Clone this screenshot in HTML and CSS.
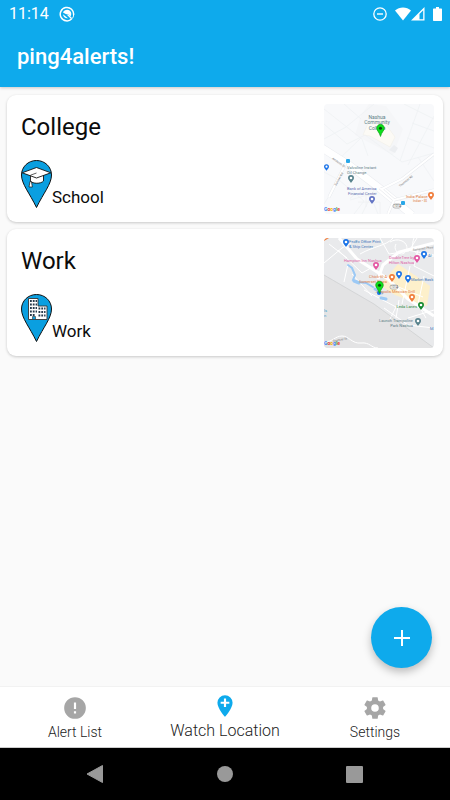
FILE: index.html
```html
<!DOCTYPE html>
<html lang="en">
<head>
    <meta charset="UTF-8">
    <meta name="viewport" content="width=device-width, initial-scale=1.0">
    <title>ping4alerts!</title>
    <link rel="stylesheet" href="styles.css">
</head>
<body>
    <svg class="sprite" aria-hidden="true">
        <symbol id="poi" viewBox="0 0 6 8">
            <path d="M3 0a3 3 0 0 0-3 3c0 2 2 3 3 5 1-2 3-3 3-5a3 3 0 0 0-3-3z" fill="currentColor"/>
            <circle cx="3" cy="3" r="1.3" fill="#fff"/>
        </symbol>
        <symbol id="place" viewBox="0 0 8 12">
            <path d="M4 .3a3.5 3.5 0 0 0-3.5 3.6c0 2.2 2.6 3.8 3.5 7.6.9-3.8 3.5-5.4 3.5-7.6A3.5 3.5 0 0 0 4 .3z" fill="#0de01b" stroke="#079a10" stroke-width=".6"/>
            <circle cx="4" cy="4" r="1.4" fill="#064a09"/>
        </symbol>
    </svg>

    <header class="header">
        <div class="status-bar">
            <span class="clock">11:14</span>
            <svg class="status-icon" viewBox="0 0 16 16" width="16" height="16">
                <path d="M12.8 12.8A6.7 6.7 0 1 1 14.6 9" fill="none" stroke="#fff" stroke-width="1.5"/>
                <path d="M14.6 9c0 1.6-.7 2.8-1.8 3.8" fill="none" stroke="#fff" stroke-width="1"/>
                <path d="M4 6.6C5 3.8 8.6 2.9 10.9 4.8c1.7 1.5 1.8 3.9.6 5.6L9 7.9 7.2 8.2z" fill="#fff"/>
                <path d="M4 8.2l5 4c-2.4.6-4.7-1-5-4z" fill="#fff"/>
                <path d="M8.5 8.5l4 4" stroke="#fff" stroke-width="1.2"/>
            </svg>
            <div class="status-right">
                <svg viewBox="0 0 14 14" width="14" height="14">
                    <circle cx="7" cy="7" r="6.2" fill="none" stroke="#fff" stroke-width="1.3"/>
                    <path d="M4 7h6" stroke="#fff" stroke-width="1.4"/>
                </svg>
                <svg class="wifi" viewBox="0 0 16 14" width="16" height="14">
                    <path d="M0 3.5C4.5-.5 11.5-.5 16 3.5L8 13.5z" fill="#fff"/>
                </svg>
                <svg viewBox="0 0 14 14" width="14" height="14">
                    <path d="M13.5 0v13.5H0zM12.2 3.2L8.5 6.9v5.3h3.7z" fill="#fff" fill-rule="evenodd"/>
                </svg>
                <svg class="battery" viewBox="0 0 9 14" width="9" height="14">
                    <path d="M3 0h3v1.5h2.3q.7 0 .7.7v11.1q0 .7-.7.7H.7q-.7 0-.7-.7V2.2q0-.7.7-.7H3z" fill="#fff"/>
                </svg>
            </div>
        </div>
        <h1>ping4alerts!</h1>
    </header>

    <main class="content">
        <article class="card">
            <div class="info">
                <h2>College</h2>
                <div class="category">
                    <svg viewBox="0 0 31 48" width="31" height="48">
                        <path d="M15.5.5C7 .5.5 7 .5 15c0 9 8 18 15 32.5C22.5 33 30.5 24 30.5 15 30.5 7 24 .5 15.5.5z" fill="#0a9fe0" stroke="#111" stroke-width="1"/>
                        <path d="M9.5 14v7c2 3 10.5 3 13 0v-7z" fill="#fff" stroke="#111" stroke-width=".9"/>
                        <path d="M1.2 12.8L15.5 7.5l14.3 5.3L15.5 18z" fill="#fff" stroke="#111" stroke-width=".9"/>
                        <path d="M15.5 13L9.5 15.2v7" fill="none" stroke="#333" stroke-width=".8"/>
                        <path d="M9 21.5h1.4l1 5.5H8z" fill="#fff" stroke="#111" stroke-width=".7"/>
                    </svg>
                    <span>School</span>
                </div>
            </div>
            <svg class="map" viewBox="0 0 110 110" width="110" height="110" role="img" aria-label="Map of College">
                <rect width="110" height="110" fill="#f8f9fb"/>
                <path d="M37 11l8-11 17 2 17 23-10 26-38-20z" fill="#f5f6f8"/>
                <path d="M45 17l13-2 13 18-5 10-20-11-7-1z" fill="#fcfaf5" stroke="#efece5" stroke-width=".5"/>
                <path d="M70 41l4 3-3 5-6-3z" fill="#eceef1"/>
                <g fill="none" stroke="#eff1f4" stroke-width=".8">
                    <path d="M0 35l22-12L50 0M0 5l38 30 6 17M20 0l17 15M0 20l23 20 18-9 37 27 32-9M76 57l20-57M84 61L110 12M88 19l22 8M83 34l27 10M80 0l30 15M14 56L37 34M94 53l16 24"/>
                    <path d="M0 68l15 8-15 24M15 76l25 21-10 13M26 95c4-7 16-8 22 0l6 15M26 96l28-8M34 98h22v12M42 89v14M52 82L38 110"/>
                </g>
                <path d="M-2 44l27 17 29 22 34 28" fill="none" stroke="#e9ebef" stroke-width="8"/>
                <path d="M-2 44l27 17 29 22 34 28" fill="none" stroke="#fff" stroke-width="7"/>
                <path d="M22 59L5 93M58 85l20-10 32-25M56 84l14 12 40-10M70 96l-6 14" fill="none" stroke="#e8eaee" stroke-width="3"/>
                <path d="M22 59L5 93M58 85l20-10 32-25M56 84l14 12 40-10M70 96l-6 14" fill="none" stroke="#fff" stroke-width="2"/>
                <g class="map-title" fill="#5b7e85" text-anchor="middle">
                    <text x="53" y="15">Nashua</text>
                    <text x="53" y="20">Community</text>
                    <text x="53" y="26">College</text>
                </g>
                <use href="#place" x="52" y="20" width="9" height="13"/>
                <g class="map-text">
                    <text x="23" y="65" fill="#607d86">Valvoline Instant</text>
                    <text x="23" y="70" fill="#607d86">Oil Change</text>
                    <text x="23" y="86" fill="#596bb0">Bank of America</text>
                    <text x="24" y="91" fill="#596bb0">Financial Center</text>
                    <text x="82" y="94" fill="#e07b3c">India Palace</text>
                    <text x="89" y="98" class="map-small" fill="#e07b3c">Indian • $$</text>
                    <text transform="translate(8 55) rotate(35)" class="map-small" fill="#777">Amherst St</text>
                    <text transform="translate(12 82) rotate(-60)" class="map-small" fill="#777">Sumner Rd</text>
                    <text transform="translate(76 83) rotate(-38)" class="map-small" fill="#777">Thornton Rd</text>
                </g>
                <rect x="22" y="55" width="4" height="4" rx="1" fill="#29a7e8"/>
                <rect x="77" y="97" width="4" height="4" rx="1" fill="#29a7e8"/>
                <rect x="69" y="100" width="8" height="4" rx="2" fill="#fff" stroke="#888" stroke-width=".6"/>
                <text x="70" y="103" class="map-small" fill="#555">101A</text>
                <use href="#poi" x="0" y="60" width="5" height="7" color="#1a73e8"/>
                <use href="#poi" x="24" y="71" width="6" height="8" color="#57828c"/>
                <use href="#poi" x="45" y="92" width="6" height="8" color="#6374c4"/>
                <use href="#poi" x="104" y="88" width="6" height="8" color="#f07c3a"/>
                <text class="google" x="0" y="107"><tspan fill="#4285f4">G</tspan><tspan fill="#ea4335">o</tspan><tspan fill="#f2b400">o</tspan><tspan fill="#4285f4">g</tspan><tspan fill="#34a853">l</tspan><tspan fill="#ea4335">e</tspan></text>
            </svg>
        </article>

        <article class="card">
            <div class="info">
                <h2>Work</h2>
                <div class="category">
                    <svg viewBox="0 0 31 48" width="31" height="48">
                        <path d="M15.5.5C7 .5.5 7 .5 15c0 9 8 18 15 32.5C22.5 33 30.5 24 30.5 15 30.5 7 24 .5 15.5.5z" fill="#0a9fe0" stroke="#111" stroke-width="1"/>
                        <path d="M7.5 4.5H17V12h9v13.5H7.5z" fill="#fff" stroke="#333" stroke-width=".9"/>
                        <path d="M9 7h1.8m1 0h1.8m1 0H16M9 10.5h1.8m1 0h1.8m1 0H16M9 14h1.8m1 0h1.8m1 0H16M9 17.5h1.8m1 0h1.8m1 0H16M9 21h1.8m1 0h1.8M17.5 14.5h1.8m1 0h1.8m1 0h1.4M17.5 18h1.8m1 0h1.8m1 0h1.4M17.5 21.5h1.8m1 0h1.8m1 0h1.4" stroke="#27394a" stroke-width="1.8"/>
                        <path d="M11.5 22.5h3v3h-3z" fill="#0a9fe0" stroke="#333" stroke-width=".6"/>
                    </svg>
                    <span>Work</span>
                </div>
            </div>
            <svg class="map" viewBox="0 0 110 110" width="110" height="110" role="img" aria-label="Map of Work">
                <rect width="110" height="110" fill="#e9eaec"/>
                <path d="M0 37l50 29 60 44H0z" fill="#e3e3e4"/>
                <path d="M74 26l18 12 14 10-5 20-30-11-15-10z" fill="#fdf0cb"/>
                <path d="M94 54l12-6-3 20-10-4z" fill="#fdf0cb"/>
                <g fill="none" stroke="#fff" stroke-width="1">
                    <path d="M0 25l18-15 14-8M14 12l24 23 16-9M5 6l18 14M28 36l20 22M56 0l9 16 20-3 8-13M66 4c10-6 20 2 16 9s-14 0-10-7M83 12l27 5M90 0c-6 16 8 20 20 18M94 12l-4 16 20 10M86 28l-8 38M67 46l32 13M100 38l-6 28 8 14M40 52l32 17-6 12M60 70l24 17 26 3M75 62l-3 18M84 80l26-8M24 26l-4 18M0 104c9 0 11-6 18-6s10 8 19 7 10 5 17 5M36 16c14-8 26-8 33-16"/>
                </g>
                <path d="M15 0l18 21 31 20 20 20 26 17" fill="none" stroke="#fff" stroke-width="3"/>
                <path d="M54 41l5-14 16-13 35-9" fill="none" stroke="#fff" stroke-width="3"/>
                <path d="M0 37l50 29 60 44" fill="none" stroke="#c8c9cb" stroke-width=".6"/>
                <g fill="none" stroke="#9cc9f5" stroke-linecap="round">
                    <path d="M24 27l4 3 3 7-2 5 5 2 8 1 7 4" stroke-width="2"/>
                    <path d="M30 43l5 2M51 51l7 4M57 60l5 1" stroke-width="3"/>
                </g>
                <g class="map-text">
                    <text x="25" y="5" fill="#4277ba">FedEx Office Print</text>
                    <text x="25" y="10" fill="#4277ba">&amp; Ship Center</text>
                    <text x="20" y="24" fill="#dd62a5">Hampton Inn Nashua</text>
                    <text x="65" y="21" fill="#dd62a5">DoubleTree by</text>
                    <text x="65" y="26" fill="#dd62a5">Hilton Nashua</text>
                    <text x="63" y="40" fill="#df793e" text-anchor="end">Chick-fil-A</text>
                    <text x="63" y="45" fill="#df793e" text-anchor="end">Somerset Plaza</text>
                    <text x="87" y="43" fill="#4277ba">Market Bask</text>
                    <text x="104" y="19" fill="#4277ba">Al</text>
                    <text x="91" y="55" fill="#df793e" text-anchor="end">Joppolis Mexican Grill</text>
                    <text x="93" y="70" fill="#2e8a3c" text-anchor="end">Leda Lanes</text>
                    <text x="89" y="84" fill="#607d86" text-anchor="end">Launch Trampoline</text>
                    <text x="89" y="89" fill="#607d86" text-anchor="end">Park Nashua</text>
                    <text x="106" y="92" fill="#4277ba">M</text>
                    <text x="0" y="74" fill="#399fcc">ls</text>
                    <text x="0" y="79" fill="#399fcc">n</text>
                    <text transform="translate(89 13) rotate(-8)" class="map-small" fill="#777">Somerset Pkwy</text>
                    <text transform="translate(9 104) rotate(-10)" class="map-small" fill="#777">Spencer St</text>
                </g>
                <rect x="66" y="47" width="8" height="4" rx="2" fill="#fff" stroke="#888" stroke-width=".6"/>
                <text x="67" y="50" class="map-small" fill="#555">101A</text>
                <use href="#poi" x="19" y="1" width="6" height="8" color="#1a73e8"/>
                <use href="#poi" x="49" y="24" width="6" height="8" color="#e455a2"/>
                <use href="#poi" x="90" y="17" width="6" height="8" color="#e455a2"/>
                <use href="#poi" x="97" y="13" width="6" height="8" color="#1a73e8"/>
                <use href="#poi" x="72" y="33" width="6" height="8" color="#1a73e8"/>
                <use href="#poi" x="81" y="37" width="6" height="8" color="#1a73e8"/>
                <use href="#poi" x="65" y="36" width="6" height="8" color="#f07c3a"/>
                <use href="#poi" x="85" y="56" width="6" height="8" color="#f07c3a"/>
                <use href="#poi" x="94" y="64" width="6" height="8" color="#168a30"/>
                <use href="#poi" x="91" y="80" width="6" height="8" color="#57828c"/>
                <circle cx="55" cy="55" r="2" fill="#1a73e8"/>
                <use href="#place" x="51" y="43" width="9" height="13"/>
                <path d="M0 0h5L0 3z" fill="#f07c3a"/>
                <text class="google" x="0" y="107"><tspan fill="#4285f4">G</tspan><tspan fill="#ea4335">o</tspan><tspan fill="#f2b400">o</tspan><tspan fill="#4285f4">g</tspan><tspan fill="#34a853">l</tspan><tspan fill="#ea4335">e</tspan></text>
            </svg>
        </article>

        <button class="fab" type="button" aria-label="Add location">
            <svg viewBox="0 0 16 16" width="16" height="16">
                <path d="M8 0v16M0 8h16" stroke="#fff" stroke-width="2"/>
            </svg>
        </button>
    </main>

    <nav class="tabs">
        <a href="#alerts">
            <svg viewBox="0 0 24 24" width="26" height="26">
                <path d="M12 2a10 10 0 1 0 0 20 10 10 0 0 0 0-20zm1 15h-2v-2h2zm0-4h-2V7h2z" fill="#a6a6a6"/>
            </svg>
            <span>Alert List</span>
        </a>
        <a href="#locations" class="active">
            <svg viewBox="0 0 24 24" width="26" height="26">
                <path d="M12 2a7 7 0 0 0-7 7c0 5.25 7 13 7 13s7-7.75 7-13a7 7 0 0 0-7-7zm4 8h-3v3h-2v-3H8V8h3V5h2v3h3z" fill="#0eaaec"/>
            </svg>
            <span>Watch Location</span>
        </a>
        <a href="#settings">
            <svg viewBox="0 0 24 24" width="26" height="26">
                <path d="M19.43 12.98c.04-.32.07-.64.07-.98s-.03-.66-.07-.98l2.11-1.65c.19-.15.24-.42.12-.64l-2-3.46c-.12-.22-.39-.3-.61-.22l-2.49 1c-.52-.4-1.08-.73-1.69-.98l-.38-2.65A.488.488 0 0 0 14 2h-4c-.25 0-.46.18-.49.42l-.38 2.65c-.61.25-1.17.59-1.69.98l-2.49-1c-.23-.09-.49 0-.61.22l-2 3.46c-.13.22-.07.49.12.64l2.11 1.65c-.04.32-.07.65-.07.98s.03.66.07.98l-2.11 1.65c-.19.15-.24.42-.12.64l2 3.46c.12.22.39.3.61.22l2.49-1c.52.4 1.08.73 1.69.98l.38 2.65c.03.24.24.42.49.42h4c.25 0 .46-.18.49-.42l.38-2.65c.61-.25 1.17-.59 1.69-.98l2.49 1c.23.09.49 0 .61-.22l2-3.46c.12-.22.07-.49-.12-.64zM12 15.5a3.5 3.5 0 1 1 0-7 3.5 3.5 0 0 1 0 7z" fill="#a6a6a6"/>
            </svg>
            <span>Settings</span>
        </a>
    </nav>

    <footer class="system-nav">
        <button type="button" aria-label="Back">
            <svg viewBox="0 0 18 18" width="18" height="18"><path d="M16.5.5v17L1 9z" fill="#999" stroke="#999" stroke-linejoin="round"/></svg>
        </button>
        <button type="button" aria-label="Home">
            <svg viewBox="0 0 18 18" width="18" height="18"><circle cx="9" cy="9" r="8" fill="#999"/></svg>
        </button>
        <button type="button" aria-label="Recent apps">
            <svg viewBox="0 0 18 18" width="18" height="18"><rect width="17" height="17" y="1" rx="1" fill="#999"/></svg>
        </button>
    </footer>
</body>
</html>
```

FILE: styles.css
```css
* {
    box-sizing: border-box;
}
body {
    font-family: Roboto, sans-serif;
    background-color: #fafafa;
    color: #0c0c0c;
    margin: 0;
    min-height: 100vh;
    display: flex;
    flex-direction: column;
}
h1, h2 {
    margin: 0;
}
svg {
    display: block;
}
button {
    border: 0;
    padding: 0;
    cursor: pointer;
}
.sprite {
    position: absolute;
    width: 0;
    height: 0;
}
.header {
    background: #0eaaec;
    color: #fff;
    box-shadow: 0 1px 3px rgba(0, 0, 0, 0.2);
}
.status-bar {
    display: flex;
    align-items: center;
    height: 27px;
    padding: 0 8px 0 9px;
}
.clock {
    font-size: 16px;
    line-height: 28px;
}
.status-icon {
    margin-left: 10px;
}
.status-right {
    display: flex;
    align-items: center;
    margin-left: auto;
}
.wifi {
    margin-left: 8px;
}
.battery {
    margin-left: 8px;
}
h1 {
    padding: 0 17px;
    font-size: 22px;
    font-weight: 500;
    line-height: 60px;
}
.content {
    position: relative;
    flex: 1;
    display: flex;
    flex-direction: column;
    gap: 7px;
    padding: 8px 7px;
}
.card {
    display: flex;
    justify-content: space-between;
    padding: 9px 9px 8px 14px;
    background: #fff;
    border-radius: 9px;
    box-shadow: 0 1px 3px rgba(0, 0, 0, 0.2);
}
.info {
    display: flex;
    flex-direction: column;
    justify-content: space-between;
    padding: 7px 0 6px;
}
h2 {
    font-size: 24px;
    font-weight: 400;
    line-height: 32px;
}
.category {
    display: flex;
    align-items: flex-end;
    font-size: 17px;
    line-height: 22px;
}
.map {
    border-radius: 4px;
}
.map-title {
    font-size: 5px;
}
.map-text {
    font-size: 4px;
}
.map-small {
    font-size: 3px;
}
.google {
    font-size: 5px;
    font-weight: 700;
}
.fab {
    position: absolute;
    right: 18px;
    bottom: 18px;
    display: flex;
    align-items: center;
    justify-content: center;
    width: 61px;
    height: 61px;
    border-radius: 50%;
    background: #0eaaec;
    box-shadow: 0 4px 8px rgba(0, 0, 0, 0.25);
}
.tabs {
    display: grid;
    grid-template-columns: repeat(3, 1fr);
    height: 62px;
    background: #fff;
    border-top: 1px solid #f2f2f2;
    border-bottom: 1px solid #ccc;
}
.tabs a {
    display: flex;
    flex-direction: column;
    align-items: center;
    padding-top: 8px;
    color: #222;
    font-size: 14px;
    font-weight: 300;
    line-height: 22px;
    text-decoration: none;
}
.tabs .active {
    padding-top: 6px;
    font-size: 16px;
    line-height: 24px;
}
.system-nav {
    display: flex;
    justify-content: center;
    gap: 112px;
    height: 52px;
    background: #000;
}
.system-nav button {
    background: none;
}
```
